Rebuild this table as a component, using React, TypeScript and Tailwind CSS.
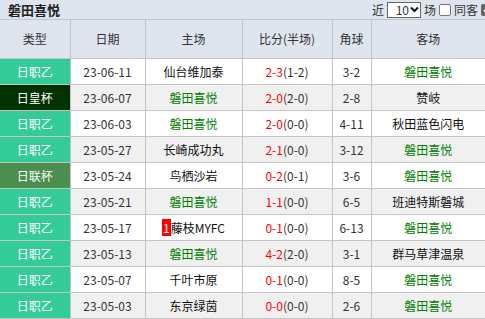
import React from "react"

type Row = {
  type: string
  date: string
  home: string
  score: string
  half: string
  corner: string
  away: string
  rank?: string
}

const TEAM = "磐田喜悦"

const rows: Row[] = [
  { type: "日职乙", date: "23-06-11", home: "仙台维加泰", score: "2-3", half: "(1-2)", corner: "3-2", away: TEAM },
  { type: "日皇杯", date: "23-06-07", home: TEAM, score: "2-0", half: "(2-0)", corner: "2-8", away: "赞岐" },
  { type: "日职乙", date: "23-06-03", home: TEAM, score: "2-0", half: "(0-0)", corner: "4-11", away: "秋田蓝色闪电" },
  { type: "日职乙", date: "23-05-27", home: "长崎成功丸", score: "2-1", half: "(0-0)", corner: "3-12", away: TEAM },
  { type: "日联杯", date: "23-05-24", home: "鸟栖沙岩", score: "0-2", half: "(0-1)", corner: "3-6", away: TEAM },
  { type: "日职乙", date: "23-05-21", home: TEAM, score: "1-1", half: "(0-0)", corner: "6-5", away: "班迪特斯磐城" },
  { type: "日职乙", date: "23-05-17", home: "藤枝MYFC", score: "0-1", half: "(0-0)", corner: "6-13", away: TEAM, rank: "1" },
  { type: "日职乙", date: "23-05-13", home: TEAM, score: "4-2", half: "(2-0)", corner: "3-1", away: "群马草津温泉" },
  { type: "日职乙", date: "23-05-07", home: "千叶市原", score: "0-1", half: "(0-0)", corner: "8-5", away: TEAM },
  { type: "日职乙", date: "23-05-03", home: "东京绿茵", score: "0-0", half: "(0-0)", corner: "2-6", away: TEAM },
]

function typeBg(t: string) {
  if (t === "日皇杯") return "bg-[#003300]"
  if (t === "日联杯") return "bg-[#4b8f4f]"
  return "bg-[#33cc99]"
}

function Team({ name, rank }: { name: string; rank?: string }) {
  return (
    <span className={name === TEAM ? "text-[#008000]" : "text-[#111]"}>
      {rank && <span className="bg-[#ff0000] text-white px-[1px]">{rank}</span>}
      {name}
    </span>
  )
}

export default function App() {
  return (
    <div
      className="w-[485px] h-[319px] overflow-hidden bg-white text-[12px] text-[#333]"
      style={{ fontFamily: '"Noto Sans CJK SC", "Noto Sans", sans-serif' }}
    >
      <div className="h-[19px] bg-[#dfe5ee] flex items-center justify-between pl-[8px] whitespace-nowrap">
        <span className="font-bold text-[13px] text-[#222] leading-none">{TEAM}</span>
        <div className="flex items-center gap-[3px] text-[#333] leading-none -mr-[8px]">
          <span>近</span>
          <span className="h-[16px] w-[34px] border border-[#666] bg-white flex items-center justify-end pr-[1px] gap-[1px] text-[12px]">
            10
            <svg width="9" height="7" viewBox="0 0 9 7"><path d="M1 1.5 L4.5 5 L8 1.5" stroke="#111" strokeWidth="2" fill="none" /></svg>
          </span>
          <span>场</span>
          <span className="w-[12px] h-[12px] border border-[#777] rounded-[2px] bg-white" />
          <span>同客</span>
          <span className="w-[12px] h-[12px] rounded-[2px] bg-[#666] flex items-center justify-center">
            <svg width="9" height="8" viewBox="0 0 9 8"><path d="M1 4 L3.5 6.5 L8 1.5" stroke="#fff" strokeWidth="1.6" fill="none" /></svg>
          </span>
        </div>
      </div>
      <table className="w-[485px] border-collapse table-fixed">
        <colgroup>
          <col className="w-[70px]" />
          <col className="w-[75px]" />
          <col className="w-[97px]" />
          <col className="w-[90px]" />
          <col className="w-[39px]" />
          <col className="w-[114px]" />
        </colgroup>
        <thead>
          <tr className="h-[39px] bg-[#dfe5ee] text-[#333]">
            {["类型", "日期", "主场", "比分(半场)", "角球", "客场"].map((h, i) => (
              <th
                key={h}
                className={`font-normal border border-[#c4c4c4] border-t-[#c4c4c4] ${i === 0 ? "border-l-0" : ""} ${i === 5 ? "border-r-0" : ""}`}
              >
                {h}
              </th>
            ))}
          </tr>
        </thead>
        <tbody>
          {rows.map((r, idx) => (
            <tr key={r.date} className={`h-[26px] text-center ${idx % 2 === 1 ? "bg-[#f0f0f0]" : "bg-white"}`}>
              <td className={`${typeBg(r.type)} text-white border border-[#c4c4c4] border-l-0`}>{r.type}</td>
              <td className="border border-[#c4c4c4]">{r.date}</td>
              <td className="border border-[#c4c4c4]">
                <Team name={r.home} rank={r.rank} />
              </td>
              <td className="border border-[#c4c4c4]">
                <span className="text-[#ff0000]">{r.score}</span>
                {r.half}
              </td>
              <td className="border border-[#c4c4c4]">{r.corner}</td>
              <td className="border border-[#c4c4c4] border-r-0">
                <Team name={r.away} />
              </td>
            </tr>
          ))}
        </tbody>
      </table>
    </div>
  )
}
